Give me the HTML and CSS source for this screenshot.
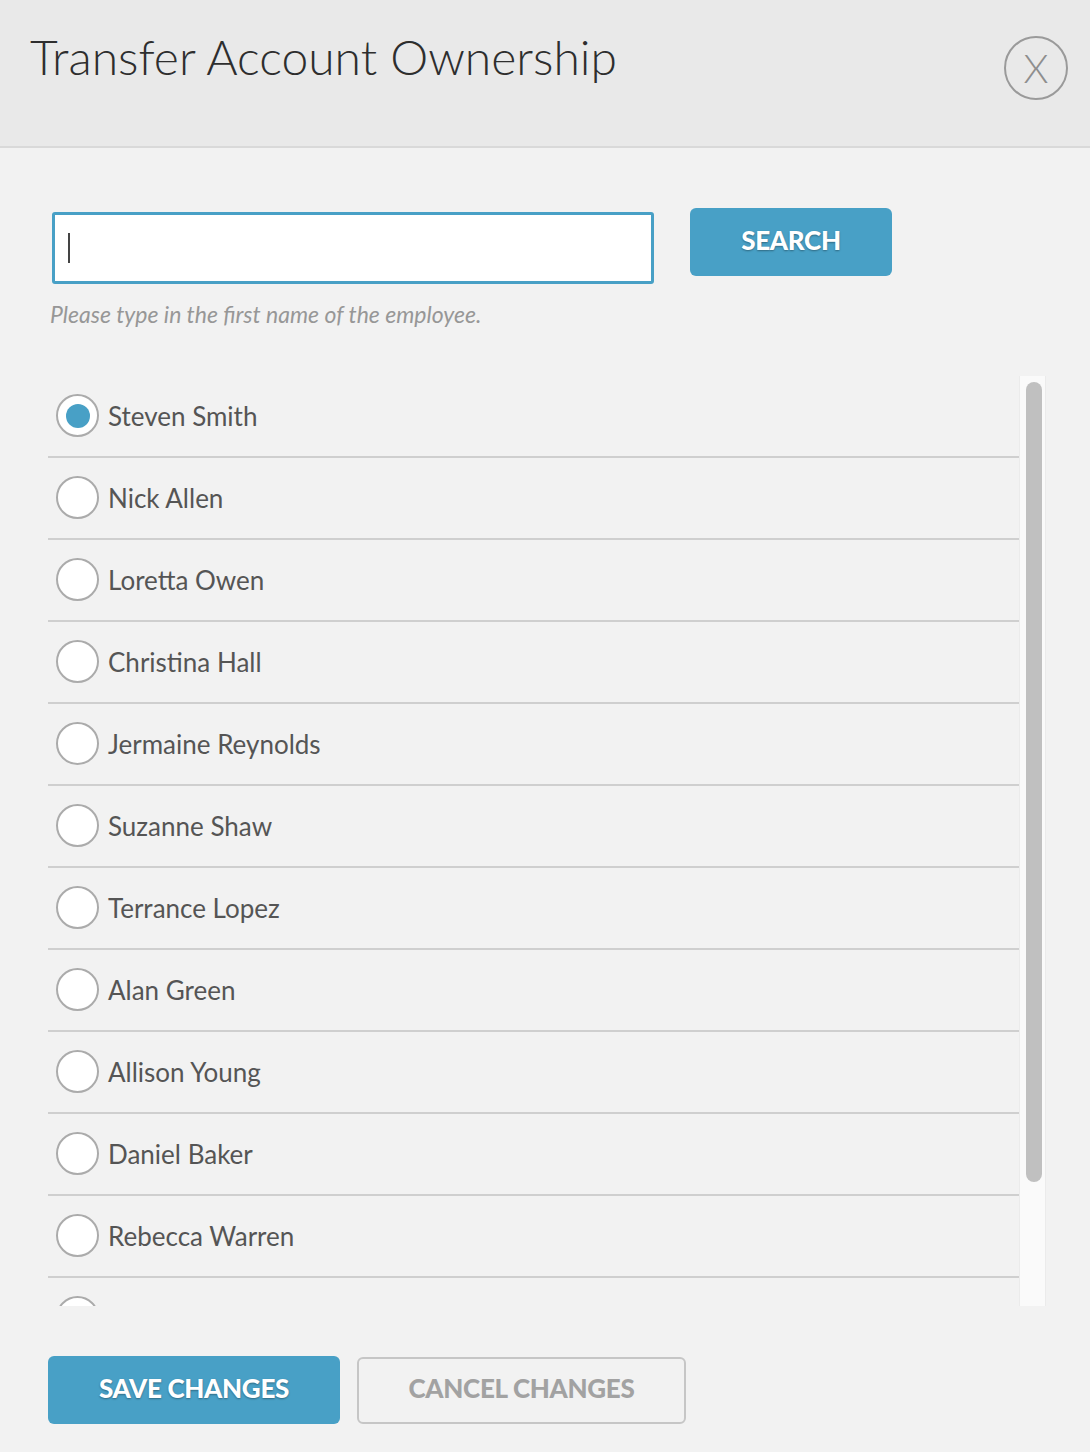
FILE: index.html
```html
<!DOCTYPE html>
<html lang="en">
<head>
<meta charset="utf-8">
<title>Transfer Account Ownership</title>
<link rel="stylesheet" href="styles.css">
</head>
<body>
<div class="modal">
  <header class="modal-header">
    <h1 class="modal-title">Transfer Account Ownership</h1>
    <button class="close-btn" type="button" aria-label="Close">X</button>
  </header>
  <main class="modal-body">
    <div class="search-row">
      <div class="search-box"><span class="caret"></span></div>
      <button class="btn btn-primary btn-search" type="button">SEARCH</button>
    </div>
    <p class="hint">Please type in the first name of the employee.</p>
    <div class="list-wrap">
      <div class="list">
        <label class="row"><span class="radio checked"></span><span class="name">Steven Smith</span></label>
        <label class="row"><span class="radio"></span><span class="name">Nick Allen</span></label>
        <label class="row"><span class="radio"></span><span class="name">Loretta Owen</span></label>
        <label class="row"><span class="radio"></span><span class="name">Christina Hall</span></label>
        <label class="row"><span class="radio"></span><span class="name">Jermaine Reynolds</span></label>
        <label class="row"><span class="radio"></span><span class="name">Suzanne Shaw</span></label>
        <label class="row"><span class="radio"></span><span class="name">Terrance Lopez</span></label>
        <label class="row"><span class="radio"></span><span class="name">Alan Green</span></label>
        <label class="row"><span class="radio"></span><span class="name">Allison Young</span></label>
        <label class="row"><span class="radio"></span><span class="name">Daniel Baker</span></label>
        <label class="row"><span class="radio"></span><span class="name">Rebecca Warren</span></label>
        <label class="row"><span class="radio"></span></label>
      </div>
      <div class="scroll-track"><div class="scroll-thumb"></div></div>
    </div>
    <div class="actions">
      <button class="btn btn-primary btn-save" type="button">SAVE CHANGES</button>
      <button class="btn btn-outline btn-cancel" type="button">CANCEL CHANGES</button>
    </div>
  </main>
</div>
</body>
</html>
```
FILE: styles.css
```css
* { box-sizing: border-box; }
html, body { margin: 0; padding: 0; }
body {
  background: #f2f2f2;
  font-family: Lato, "Open Sans", "Liberation Sans", sans-serif;
  color: #555;
  width: 1090px;
  height: 1452px;
  overflow: hidden;
}
.modal { display: flex; flex-direction: column; height: 1452px; }
.modal-header {
  height: 148px;
  background: #e9e9e9;
  border-bottom: 2px solid #d9d9d9;
  display: flex;
  justify-content: space-between;
  align-items: flex-start;
  padding: 0 22px 0 30px;
}
.modal-title {
  margin: 28px 0 0;
  font-size: 48px;
  font-weight: 300;
  line-height: 58px;
  color: #2e2e2e;
  letter-spacing: 0;
}
.close-btn {
  margin-top: 36px;
  width: 64px;
  height: 64px;
  border-radius: 50%;
  border: 2px solid #9a9a9a;
  background: transparent;
  color: #8e8e8e;
  font-family: Lato, "Open Sans", sans-serif;
  font-weight: 300;
  font-size: 40px;
  line-height: 1;
  padding: 0;
  display: flex;
  align-items: center;
  justify-content: center;
}
.modal-body {
  padding: 60px 44px 0 48px;
  display: flex;
  flex-direction: column;
}
.search-row { display: flex; align-items: flex-start; gap: 36px; }
.search-box {
  margin-top: 4px;
  margin-left: 4px;
  width: 602px;
  height: 72px;
  background: #fff;
  border: 3px solid #48a0c6;
  border-radius: 3px;
  display: flex;
  align-items: center;
  padding-left: 13px;
}
.caret { width: 2px; height: 30px; background: #444; }
.btn {
  height: 68px;
  border-radius: 6px;
  font-family: Lato, "Open Sans", sans-serif;
  font-weight: 900;
  font-size: 26px;
  letter-spacing: -0.3px;
  padding: 0 0 4px;
  cursor: pointer;
}
.btn-primary {
  background: #48a0c6;
  border: none;
  color: #fff;
  text-shadow: 0 1px 2px rgba(0,0,0,0.35);
}
.btn-search { width: 202px; }
.hint {
  margin: 16px 0 0 2px;
  font-size: 23px;
  line-height: 28px;
  font-style: italic;
  color: #979797;
}
.list-wrap {
  margin-top: 48px;
  height: 930px;
  display: flex;
  width: 998px;
}
.list {
  width: 971px;
  height: 930px;
  overflow: hidden;
}
.scroll-track {
  width: 27px;
  height: 930px;
  background: #fafafa;
  border-left: 1px solid #ebebeb;
  border-right: 1px solid #ebebeb;
  padding: 6px 3px 0 6px;
}
.scroll-thumb {
  width: 16px;
  height: 800px;
  background: #c0c0c0;
  border-radius: 8px;
}
.row {
  display: flex;
  align-items: center;
  height: 82px;
  padding-left: 8px;
  padding-bottom: 1px;
  border-bottom: 2px solid #cfcfcf;
  gap: 9px;
}
.radio {
  width: 43px;
  height: 43px;
  border-radius: 50%;
  border: 2px solid #ababab;
  background: #fff;
  flex: none;
  display: flex;
  align-items: center;
  justify-content: center;
}
.radio.checked::after {
  content: "";
  width: 24px;
  height: 24px;
  border-radius: 50%;
  background: #48a0c6;
}
.name { font-size: 26px; color: #555; }
.actions { margin-top: 50px; display: flex; gap: 17px; align-items: center; }
.btn-save { width: 292px; }
.btn-outline {
  width: 329px;
  height: 67px;
  background: transparent;
  border: 2px solid #c6c6c6;
  color: #a2a2a2;
}
```
